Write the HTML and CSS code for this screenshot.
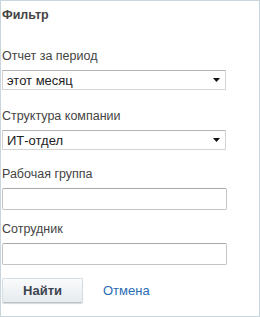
FILE: index.html
```html
<!DOCTYPE html>
<html lang="ru">
<head>
    <meta charset="UTF-8">
    <meta name="viewport" content="width=device-width, initial-scale=1.0">
    <link rel="stylesheet" href="styles.css">
</head>
<body>
    <div class="filter-panel">
        <h3 class="filter-title">Фильтр</h3>

        <div class="field field-period">
            <label class="field-label">Отчет за период</label>
            <div class="select-box">
                <span>этот месяц</span>
                <svg class="select-arrow" width="7" height="4" viewBox="0 0 7 4"><path d="M0 0H7L3.5 4Z" fill="#111"/></svg>
            </div>
        </div>

        <div class="field field-structure">
            <label class="field-label">Структура компании</label>
            <div class="select-box">
                <span>ИТ-отдел</span>
                <svg class="select-arrow" width="7" height="4" viewBox="0 0 7 4"><path d="M0 0H7L3.5 4Z" fill="#111"/></svg>
            </div>
        </div>

        <div class="field field-group">
            <label class="field-label">Рабочая группа</label>
            <input type="text" class="text-input">
        </div>

        <div class="field field-employee">
            <label class="field-label">Сотрудник</label>
            <input type="text" class="text-input">
        </div>

        <div class="actions">
            <button class="find-button">Найти</button>
            <a href="#" class="cancel-link">Отмена</a>
        </div>
    </div>
</body>
</html>
```

FILE: styles.css
```css
body {
    margin: 0;
    font-family: "Liberation Sans", Arial, sans-serif;
    background: #fff;
}

.filter-panel {
    width: 260px;
    height: 317px;
    box-sizing: border-box;
    border: 1px solid #c9d6dd;
    padding-left: 1px;
}

.filter-title {
    margin: 0;
    padding-top: 7px;
    font-size: 12.5px;
    font-weight: bold;
    color: #444;
    line-height: 14px;
}

.field-period {
    margin-top: 27px;
}
.field-structure {
    margin-top: 19px;
}
.field-group {
    margin-top: 17px;
}
.field-employee {
    margin-top: 12px;
}

.field-label {
    display: block;
    font-size: 12.5px;
    color: #444;
    line-height: 15px;
    margin-bottom: 6px;
}

.select-box {
    width: 224px;
    height: 20px;
    box-sizing: border-box;
    border: 1px solid #d4d4d4;
    border-top-color: #b5b5b5;
    display: flex;
    align-items: center;
    justify-content: space-between;
    padding: 0 5px 0 4px;
    font-size: 13px;
    color: #222;
}

.select-arrow {
    display: block;
}

.text-input {
    display: block;
    width: 225px;
    height: 22px;
    box-sizing: border-box;
    margin: 0;
    border: 1px solid #c3c3c3;
    border-top-color: #a9a9a9;
    border-radius: 2px;
    padding: 0 4px;
    font-family: inherit;
    font-size: 13px;
}

.actions {
    margin-top: 13px;
    display: flex;
    align-items: center;
    gap: 20px;
}

.find-button {
    width: 81px;
    height: 25px;
    border: 1px solid #d6dde2;
    border-bottom-color: #b9c2c8;
    border-radius: 2px;
    background: linear-gradient(#fafbfc, #e6ebee);
    box-shadow: 0 1px 1px rgba(0, 0, 0, 0.15);
    font-family: inherit;
    font-size: 13px;
    font-weight: bold;
    color: #3d4450;
    cursor: pointer;
}

.cancel-link {
    font-size: 13px;
    color: #2a6cb5;
    text-decoration: none;
}
```
